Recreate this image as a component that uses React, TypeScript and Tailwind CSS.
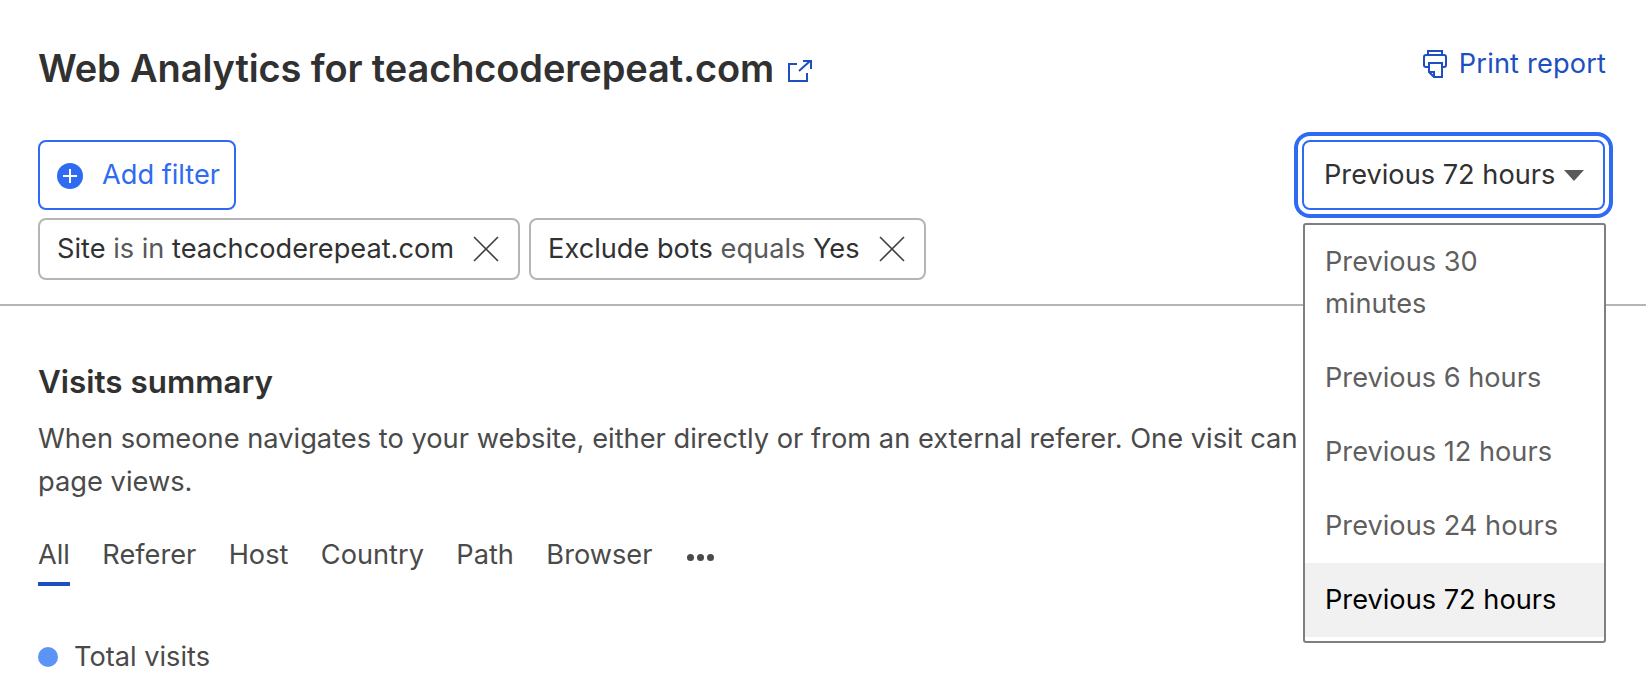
const tabs = ["All", "Referer", "Host", "Country", "Path", "Browser"];
const options = [
  "Previous 30 minutes",
  "Previous 6 hours",
  "Previous 12 hours",
  "Previous 24 hours",
  "Previous 72 hours",
];

function Chip({ name, op, value }: { name: string; op: string; value: string }) {
  return (
    <div className="flex h-[62px] items-center gap-[19px] rounded-[8px] border-2 border-[#b5b5b5] pr-[19px] pl-[17px]">
      <span className="whitespace-nowrap">
        {name} <span className="text-[#595959]">{op}</span> {value}
      </span>
      <svg width="26" height="26" viewBox="0 0 26 26" className="text-[#404040]">
        <path d="M1 1l24 24M25 1L1 25" fill="none" stroke="currentColor" strokeWidth="1.6" />
      </svg>
    </div>
  );
}

function LinkOut() {
  return (
    <svg width="24" height="22" viewBox="0 0 24 22" fill="none" stroke="#1d4fc0" strokeWidth="2" className="mt-[6px]">
      <path d="M9 4H1v17h18v-8" />
      <path d="M11 11L22 1M15 1h8v8" />
    </svg>
  );
}

function PrintIcon() {
  return (
    <svg width="24" height="28" viewBox="0 0 24 28" fill="none" stroke="#1d4fc0" strokeWidth="2">
      <path d="M5 5V1h14v4" />
      <path d="M5 17H3a2 2 0 0 1-2-2V7a2 2 0 0 1 2-2h18a2 2 0 0 1 2 2v8a2 2 0 0 1-2 2h-2" />
      <path d="M6 13h13v14h-8l-5-5z" />
      <path d="M6 22h5v5" />
    </svg>
  );
}

export default function App() {
  return (
    <div className="relative h-[688px] w-[1646px] overflow-hidden bg-white pt-[40px] font-['Inter',sans-serif] text-[27.2px] text-[#313131]">
      <div className="px-[38px]">
        <div className="flex items-start justify-between pr-[2px]">
          <div className="flex items-center gap-[14px]">
            <h1 className="text-[38px] leading-[56px] font-semibold tracking-[-0.13px]">
              Web Analytics for teachcoderepeat.com
            </h1>
            <LinkOut />
          </div>
          <a className="flex items-center gap-[12px] leading-[48px] tracking-[0.15px] text-[#1d4fc0]">
            <PrintIcon />
            Print report
          </a>
        </div>

        <div className="mt-[44px] flex items-start justify-between pr-[3px]">
          <button className="flex h-[70px] items-center gap-[19px] rounded-[8px] border-2 border-[#2f6bf2] pt-[1px] pr-[14px] pl-[17px] text-[#2f6bf2]">
            <svg width="26" height="26" viewBox="0 0 26 26">
              <circle cx="13" cy="13" r="13" fill="#2f6bf2" />
              <path d="M13 6v14M6 13h14" stroke="#fff" strokeWidth="2" />
            </svg>
            Add filter
          </button>
          <button className="flex h-[70px] w-[303px] items-center gap-[9px] rounded-[8px] border-2 border-[#2f6bf2] bg-white pt-[1px] pl-[20px] shadow-[0_0_0_4px_#fff,0_0_0_8px_#2f6bf2]">
            <span className="whitespace-nowrap">Previous 72 hours</span>
            <span className="h-0 w-0 border-x-[10px] border-t-[11px] border-x-transparent border-t-[#595959]" />
          </button>
        </div>

        <div className="mt-[8px] flex gap-[9px]">
          <Chip name="Site" op="is in" value="teachcoderepeat.com" />
          <Chip name="Exclude bots" op="equals" value="Yes" />
        </div>
      </div>

      <hr className="mt-[24px] border-t-2 border-[#b5b5b5]" />

      <div className="px-[38px] pt-[54px]">
        <h2 className="text-[31.4px] leading-[44px] font-semibold">Visits summary</h2>
        <p className="mt-[13px] text-[27.27px] leading-[43px] text-[#4a4a4a]">
          When someone navigates to your website, either directly or from an external referer. One visit can
          <br />
          page views.
        </p>
        <div className="mt-[32px] flex items-start gap-[32.4px] text-[#4a4a4a]">
          {tabs.map((t, i) => (
            <div key={t} className={i === 0 ? "border-b-4 border-[#1d4fc0] pb-[6px]" : "pb-[6px]"}>
              {t}
            </div>
          ))}
          <div className="ml-[2px] flex gap-[3px] pt-[19px]">
            <span className="h-[7px] w-[7px] rounded-full bg-[#4a4a4a]" />
            <span className="h-[7px] w-[7px] rounded-full bg-[#4a4a4a]" />
            <span className="h-[7px] w-[7px] rounded-full bg-[#4a4a4a]" />
          </div>
        </div>
        <div className="mt-[51px] flex items-center gap-[16px] text-[#4a4a4a]">
          <span className="h-[20px] w-[20px] rounded-full bg-[#5c93f7]" />
          Total visits
        </div>
      </div>

      {/* open menu of the time range select */}
      <ul className="absolute top-[223px] left-[1303px] w-[303px] rounded-[3px] border-2 border-[#7f7f7f] bg-white pb-[4px] text-[#5f5f5f]">
        {options.map((o) => (
          <li
            key={o}
            className={
              o === "Previous 72 hours"
                ? "bg-[#f1f1f1] px-[20px] py-[16px] leading-[42px] text-black"
                : "px-[20px] py-[16px] leading-[42px]"
            }
          >
            {o}
          </li>
        ))}
      </ul>
    </div>
  );
}
